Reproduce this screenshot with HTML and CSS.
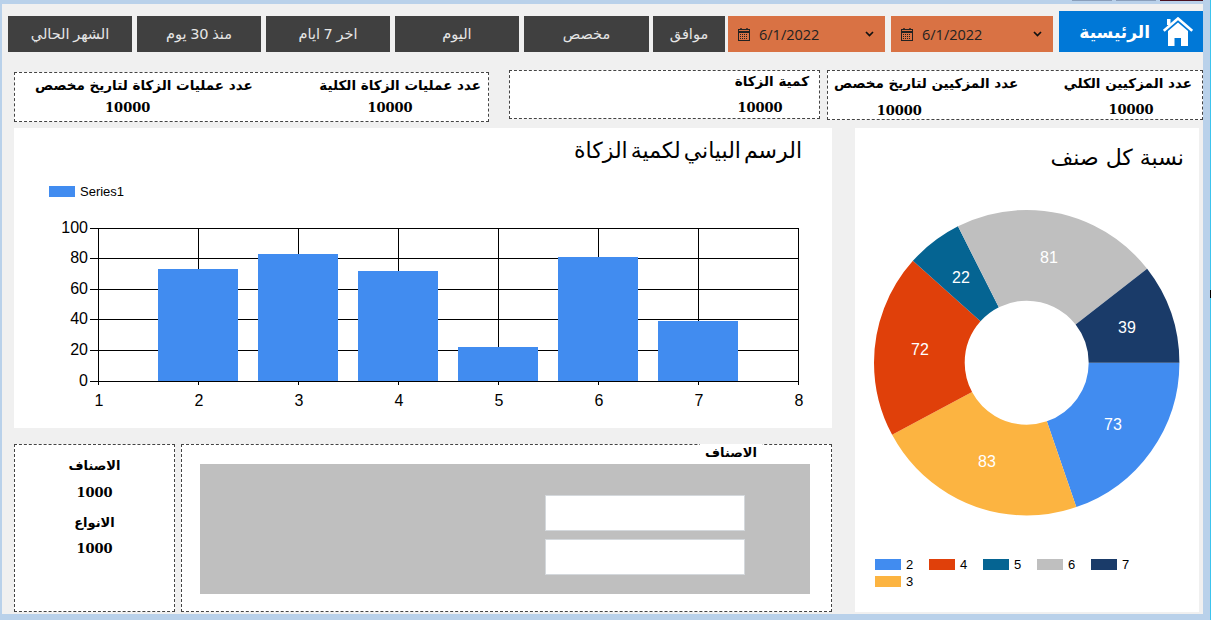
FILE: index.html
```html
<!DOCTYPE html>
<html lang="ar">
<head>
  <meta charset="UTF-8" />
  <title>الرئيسية</title>
  <link rel="stylesheet" href="styles.css">
</head>
<body>

  <div class="caption-buttons">
    <span class="caption-btn"></span>
    <span class="caption-btn"></span>
    <span class="caption-btn caption-close"></span>
  </div>
  <div class="edge-line"><span class="edge-mark"></span></div>

  <div class="window">

    <div class="toolbar" dir="rtl">
      <div class="home">
        <svg class="home-icon" width="30" height="29" viewBox="0 0 30 29">
          <path d="M4 2 H7.5 V8 H4 Z" fill="#fff"/>
          <path d="M0.8 13.8 L15 1.5 L29.2 13.8" fill="none" stroke="#fff" stroke-width="2.6"/>
          <path d="M5 14 L15 5.5 L25 14 V29 H18 V21 H11.5 V29 H5 Z" fill="#fff"/>
        </svg>
        <span>الرئيسية</span>
      </div>
      <div class="date date-to" dir="ltr">
        <svg class="cal" width="12" height="13" viewBox="0 0 12 13">
          <path d="M3 0 V2 M9 0 V2" stroke="#222" stroke-width="1.4"/>
          <rect x="0.5" y="1.5" width="11" height="11" fill="none" stroke="#222"/>
          <path d="M0 4 H12" stroke="#222" stroke-width="2"/>
          <path d="M2 6.5 H10 M2 8.5 H10 M2 10.5 H10" stroke="#222" stroke-dasharray="1 1"/>
        </svg>
        <span class="date-text">6/1/2022</span>
        <svg class="chev" width="9" height="6" viewBox="0 0 9 6"><path d="M1 1 L4.5 4.5 L8 1" fill="none" stroke="#111" stroke-width="1.7"/></svg>
      </div>
      <div class="date date-from" dir="ltr">
        <svg class="cal" width="12" height="13" viewBox="0 0 12 13">
          <path d="M3 0 V2 M9 0 V2" stroke="#222" stroke-width="1.4"/>
          <rect x="0.5" y="1.5" width="11" height="11" fill="none" stroke="#222"/>
          <path d="M0 4 H12" stroke="#222" stroke-width="2"/>
          <path d="M2 6.5 H10 M2 8.5 H10 M2 10.5 H10" stroke="#222" stroke-dasharray="1 1"/>
        </svg>
        <span class="date-text">6/1/2022</span>
        <svg class="chev" width="9" height="6" viewBox="0 0 9 6"><path d="M1 1 L4.5 4.5 L8 1" fill="none" stroke="#111" stroke-width="1.7"/></svg>
      </div>
      <button class="btn btn-ok">موافق</button>
      <button class="btn btn-custom">مخصص</button>
      <button class="btn">اليوم</button>
      <button class="btn">اخر 7 ايام</button>
      <button class="btn">منذ 30 يوم</button>
      <button class="btn">الشهر الحالي</button>
    </div>

    <div class="stats" dir="rtl">
      <div class="box stat-box stat-box-donors">
        <div class="stat">
          <div class="stat-title">عدد المزكيين الكلي</div>
          <div class="stat-value v-donors">10000</div>
        </div>
        <div class="stat">
          <div class="stat-title">عدد المزكيين لتاريخ مخصص</div>
          <div class="stat-value v-custom-donors">10000</div>
        </div>
      </div>
      <div class="box stat-box stat-box-amount">
        <div class="stat">
          <div class="stat-title stat-title-up">كمية الزكاة</div>
          <div class="stat-value v-amount">10000</div>
        </div>
      </div>
      <div class="box stat-box stat-box-ops">
        <div class="stat">
          <div class="stat-title">عدد عمليات الزكاة الكلية</div>
          <div class="stat-value v-ops">10000</div>
        </div>
        <div class="stat">
          <div class="stat-title">عدد عمليات الزكاة لتاريخ مخصص</div>
          <div class="stat-value v-custom-ops">10000</div>
        </div>
      </div>
    </div>

    <div class="main">
      <div class="left-col">
        <div class="panel chart-panel">
          <h2 class="panel-title" dir="rtl">الرسم البياني لكمية الزكاة</h2>
          <div class="series-legend"><span class="swatch swatch-series"></span>Series1</div>
          <svg class="bar-chart" width="818" height="200" viewBox="0 0 818 200">
            <g class="grid" shape-rendering="crispEdges">
              <path d="M76 18.5 H784.5 M76 48.5 H784.5 M76 79.5 H784.5 M76 109.5 H784.5 M76 140.5 H784.5 M76 171.5 H784.5"/>
              <path d="M84.5 18 V175 M184.5 18 V175 M284.5 18 V175 M384.5 18 V175 M484.5 18 V175 M584.5 18 V175 M684.5 18 V175 M784.5 18 V175"/>
            </g>
            <g fill="#418cf0">
              <rect x="144" y="59" width="80" height="112"/>
              <rect x="244" y="44" width="80" height="127"/>
              <rect x="344" y="61" width="80" height="110"/>
              <rect x="444" y="137" width="80" height="34"/>
              <rect x="544" y="47" width="80" height="124"/>
              <rect x="644" y="111" width="80" height="60"/>
            </g>
            <g class="axis-y">
              <text x="74" y="23">100</text>
              <text x="74" y="53">80</text>
              <text x="74" y="84">60</text>
              <text x="74" y="114">40</text>
              <text x="74" y="145">20</text>
              <text x="74" y="176">0</text>
            </g>
            <g class="axis-x">
              <text x="85" y="196">1</text>
              <text x="185" y="196">2</text>
              <text x="285" y="196">3</text>
              <text x="385" y="196">4</text>
              <text x="485" y="196">5</text>
              <text x="585" y="196">6</text>
              <text x="685" y="196">7</text>
              <text x="785" y="196">8</text>
            </g>
          </svg>
        </div>

        <div class="bottom-row">
          <div class="box counts">
            <div class="count-title">الاصناف</div>
            <div class="count-value">1000</div>
            <div class="count-title count-title-2">الانواع</div>
            <div class="count-value">1000</div>
          </div>
          <div class="box types">
            <span class="types-label" dir="rtl">الاصناف</span>
            <div class="types-inner">
              <input class="types-input" type="text">
              <input class="types-input" type="text">
            </div>
          </div>
        </div>
      </div>

      <div class="panel pie-panel">
        <h2 class="panel-title pie-title" dir="rtl">نسبة كل صنف</h2>
        <svg class="pie" width="344" height="320" viewBox="0 0 344 320">
          <g fill="none" stroke-width="90.7">
            <circle cx="171.7" cy="157.7" r="107.35" pathLength="370" stroke="#418cf0" stroke-dasharray="73 297" stroke-dashoffset="0"/>
            <circle cx="171.7" cy="157.7" r="107.35" pathLength="370" stroke="#fcb441" stroke-dasharray="83 287" stroke-dashoffset="-73"/>
            <circle cx="171.7" cy="157.7" r="107.35" pathLength="370" stroke="#e0400a" stroke-dasharray="72 298" stroke-dashoffset="-156"/>
            <circle cx="171.7" cy="157.7" r="107.35" pathLength="370" stroke="#056492" stroke-dasharray="22 348" stroke-dashoffset="-228"/>
            <circle cx="171.7" cy="157.7" r="107.35" pathLength="370" stroke="#bfbfbf" stroke-dasharray="81 289" stroke-dashoffset="-250"/>
            <circle cx="171.7" cy="157.7" r="107.35" pathLength="370" stroke="#1a3b69" stroke-dasharray="39 331" stroke-dashoffset="-331"/>
          </g>
          <g class="pie-labels">
            <text x="258" y="225">73</text>
            <text x="132" y="262">83</text>
            <text x="65" y="150">72</text>
            <text x="106" y="78">22</text>
            <text x="194" y="58">81</text>
            <text x="272" y="128">39</text>
          </g>
        </svg>
        <div class="pie-legend">
          <div class="pie-legend-item"><span class="swatch c-2"></span>2</div>
          <div class="pie-legend-item"><span class="swatch c-4"></span>4</div>
          <div class="pie-legend-item"><span class="swatch c-5"></span>5</div>
          <div class="pie-legend-item"><span class="swatch c-6"></span>6</div>
          <div class="pie-legend-item"><span class="swatch c-7"></span>7</div>
          <div class="pie-legend-item"><span class="swatch c-3"></span>3</div>
        </div>
      </div>
    </div>

  </div>

</body>
</html>
```

FILE: styles.css
```css
html, body {
  margin: 0;
  height: 620px;
  overflow: hidden;
}
body {
  background-color: #b9d1ea;
  font-family: "DejaVu Sans", sans-serif;
  position: relative;
}
h2 {
  margin: 0;
  font-weight: normal;
}

/* bits of the window behind, at the very edge */
.caption-buttons {
  position: absolute;
  top: 0;
  left: 1072px;
  display: flex;
  gap: 4px;
}
.caption-btn {
  width: 40px;
  height: 1px;
  background-color: #8a9fbb;
}
.caption-close {
  background-color: #4a1020;
  width: 43px;
}
.edge-line {
  position: absolute;
  top: 0;
  right: 0;
  width: 1px;
  height: 620px;
  background-color: #3cc4ee;
}
.edge-mark {
  position: absolute;
  top: 290px;
  left: 0;
  width: 1px;
  height: 8px;
  background-color: #000;
}

.window {
  width: 1201px;
  height: 610px;
  margin-left: 2px;
  position: absolute;
  top: 4px;
  background-color: #f0f0f0;
}

/* top bar */
.toolbar {
  display: flex;
  align-items: flex-end;
  height: 41px;
  padding-top: 7px;
}
.home {
  width: 144px;
  height: 41px;
  box-sizing: border-box;
  padding-right: 10px;
  margin-left: 6px;
  background-color: #0078d7;
  color: #fff;
  display: flex;
  align-items: center;
  gap: 13px;
  font-size: 17px;
  font-weight: bold;
}
.date {
  height: 36px;
  box-sizing: border-box;
  background-color: #d97244;
  color: #222;
  display: flex;
  align-items: center;
  padding: 0 11px 0 10px;
  font-family: "Open Sans", sans-serif;
  font-size: 14.5px;
}
.date-to {
  width: 162px;
  margin-left: 6px;
}
.date-from {
  width: 157px;
  margin-left: 3px;
}
.date-text {
  margin-left: 9px;
}
.chev {
  margin-left: auto;
}
.btn {
  width: 124px;
  height: 36px;
  border: 0;
  padding: 0;
  margin-left: 5px;
  background-color: #404040;
  color: #e6e6e6;
  font-family: inherit;
  font-size: 14.5px;
  word-spacing: -1px;
}
.btn-ok {
  width: 72px;
  margin-left: 4px;
}
.btn-custom {
  width: 125px;
}

/* stat boxes */
.box {
  box-sizing: border-box;
  background-color: #fff;
  border: 1px dashed #444;
}
.stats {
  display: flex;
  align-items: flex-start;
  margin-top: 18px;
  height: 58px;
}
.stat-box {
  display: flex;
  justify-content: space-between;
  padding: 0 10px;
}
.stat-box-donors {
  width: 376px;
  height: 50px;
  margin-left: 7px;
  padding-left: 6px;
}
.stat-box-amount {
  width: 311px;
  height: 49px;
  margin-left: 20px;
}
.stat-box-ops {
  width: 475px;
  height: 50px;
  margin-top: 2px;
  padding: 0 7px 0 20px;
}
.stat-title {
  font-size: 13.5px;
  font-weight: bold;
  color: #000;
  line-height: 18px;
  margin-top: 3px;
  white-space: nowrap;
}
.stat-title-up {
  margin-top: 1px;
}
.stat-value {
  font-family: "DejaVu Serif", serif;
  font-size: 13px;
  font-weight: bold;
  line-height: 18px;
  margin-top: 7px;
  width: 46px;
  text-align: center;
}
.v-donors { margin-top: 9px; margin-right: 38px; }
.v-custom-donors { margin-top: 10px; margin-right: 96px; }
.v-amount { margin-top: 9px; margin-right: 26px; }
.v-ops { margin-top: 5px; margin-right: 68px; }
.v-custom-ops { margin-top: 5px; margin-right: 102px; }

/* main area */
.main {
  display: flex;
  gap: 23px;
  padding-left: 12px;
}
.left-col {
  width: 818px;
}
.panel {
  background-color: #fff;
}
.panel-title {
  font-size: 22px;
  line-height: 30px;
  color: #000;
}
.chart-panel {
  height: 300px;
  padding-top: 8px;
  box-sizing: border-box;
}
.chart-panel .panel-title {
  padding-right: 30px;
  word-spacing: -4px;
}
.series-legend {
  display: flex;
  align-items: center;
  height: 12px;
  margin-top: 19px;
  padding-left: 35px;
  font-family: "Liberation Sans", sans-serif;
  font-size: 13px;
  color: #000;
}
.swatch {
  display: inline-block;
  width: 26px;
  height: 11px;
  margin-right: 5px;
}
.swatch-series { background-color: #418cf0; }
.bar-chart {
  display: block;
  margin-top: 13px;
}
.grid path {
  fill: none;
  stroke: #000;
  stroke-width: 1;
}
.axis-y text, .axis-x text {
  font-family: "Liberation Sans", sans-serif;
  font-size: 16px;
  fill: #000;
}
.axis-y text { text-anchor: end; }
.axis-x text { text-anchor: middle; }

/* bottom boxes */
.bottom-row {
  display: flex;
  gap: 6px;
  margin-top: 16px;
}
.counts {
  width: 161px;
  height: 168px;
  text-align: center;
  padding-top: 11px;
}
.count-title {
  font-size: 13px;
  font-weight: bold;
  line-height: 20px;
}
.count-title-2 {
  margin-top: 11px;
  margin-bottom: -1px;
}
.count-value {
  font-family: "DejaVu Serif", serif;
  font-size: 13px;
  font-weight: bold;
  line-height: 18px;
  margin-top: 8px;
}
.types {
  width: 651px;
  height: 168px;
  position: relative;
  padding: 19px 21px 0 18px;
}
.types-label {
  position: absolute;
  top: -1px;
  left: 518px;
  width: 62px;
  height: 18px;
  background-color: #fff;
  text-align: center;
  font-size: 13px;
  font-weight: bold;
  line-height: 18px;
}
.types-inner {
  height: 130px;
  box-sizing: border-box;
  background-color: #bfbfbf;
  padding: 31px 65px 0 0;
  display: flex;
  flex-direction: column;
  align-items: flex-end;
  gap: 8px;
}
.types-input {
  width: 200px;
  height: 36px;
  box-sizing: border-box;
  border: 1px solid #d4d8dc;
  background-color: #fff;
  padding: 0;
  margin: 0;
}

/* pie */
.pie-panel {
  width: 344px;
  height: 484px;
  padding-top: 15px;
  box-sizing: border-box;
}
.pie-title {
  padding-right: 15px;
}
.pie {
  display: block;
  margin-top: 32px;
}
.pie-labels text {
  font-family: "Liberation Sans", sans-serif;
  font-size: 16px;
  fill: #fff;
  text-anchor: middle;
}
.pie-legend {
  display: grid;
  grid-template-columns: repeat(5, 54px);
  grid-auto-rows: 17px;
  margin-top: 31px;
  padding-left: 20px;
  font-family: "Liberation Sans", sans-serif;
  font-size: 13px;
  color: #000;
}
.pie-legend-item {
  display: flex;
  align-items: center;
}
.c-2 { background-color: #418cf0; }
.c-4 { background-color: #e0400a; }
.c-5 { background-color: #056492; }
.c-6 { background-color: #bfbfbf; }
.c-7 { background-color: #1a3b69; }
.c-3 { background-color: #fcb441; }
```
